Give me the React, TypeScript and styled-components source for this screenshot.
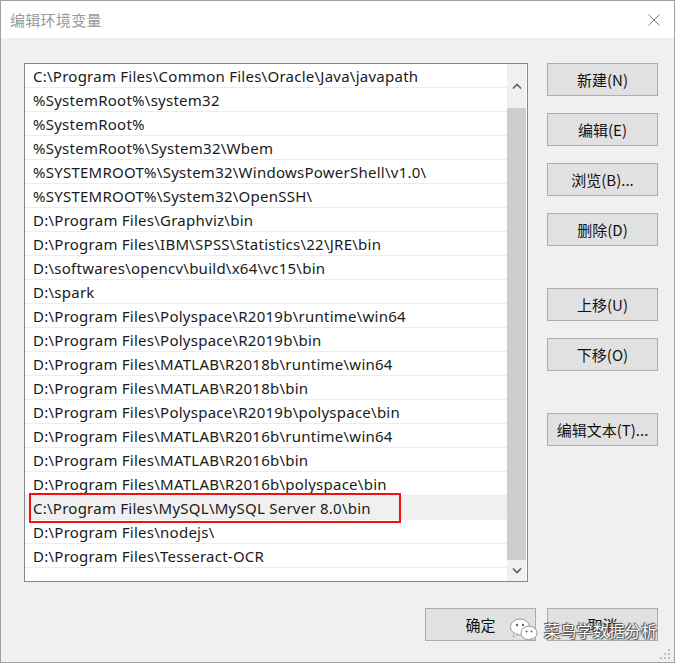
import React from "react";
import styled, { createGlobalStyle } from "styled-components";

const Global = createGlobalStyle`
  html, body { margin: 0; padding: 0; background: #ffffff; }
  body { font-family: "Noto Sans CJK SC", "Noto Sans", sans-serif; }
`;

const Dialog = styled.div`
  position: relative;
  width: 673px;
  height: 661px;
  border: 1px solid #a0a0a0;
  background: #f0f0f0;
  display: flex;
  flex-direction: column;
`;

const TitleBar = styled.div`
  height: 37px;
  background: #ffffff;
  display: flex;
  align-items: center;
  justify-content: space-between;
  padding: 0 14px 0 9px;
`;

const Title = styled.span`
  font-size: 15px;
  color: #999999;
  letter-spacing: 0.3px;
`;

const Body = styled.div`
  flex: 1;
  display: flex;
  flex-direction: column;
  padding: 25px 16px 0 23px;
`;

const Main = styled.div`
  display: flex;
  gap: 19px;
`;

const ListBox = styled.div`
  width: 502px;
  height: 517px;
  border: 1px solid #828790;
  background: #ffffff;
  display: flex;
`;

const Rows = styled.div`
  flex: 1;
  display: flex;
  flex-direction: column;
`;

const Row = styled.div<{ $selected?: boolean }>`
  position: relative;
  box-sizing: border-box;
  height: 24px;
  border-bottom: 1px solid #ececec;
  background: ${(p) => (p.$selected ? "#f0f0f0" : "#ffffff")};
  display: flex;
  align-items: center;
  padding: 1px 0 0 8px;
  font-family: "Noto Sans", "Noto Sans CJK SC", sans-serif;
  font-size: 15px;
  letter-spacing: 0.25px;
  color: #1a1a1a;
  white-space: nowrap;
`;

const Highlight = styled.div`
  position: absolute;
  z-index: 2;
  left: 4px;
  top: -3px;
  width: 368px;
  height: 26px;
  border: 2px solid #ee1111;
  pointer-events: none;
`;

const ScrollBar = styled.div`
  width: 19px;
  margin-right: 1px;
  background: #f0f0f0;
  display: flex;
  flex-direction: column;
`;

const ScrollArrow = styled.div<{ $h: number }>`
  height: ${(p) => p.$h}px;
  display: flex;
  justify-content: center;
  align-items: center;
`;

const Thumb = styled.div`
  flex: 1;
  background: #cdcdcd;
`;

const ButtonCol = styled.div`
  display: flex;
  flex-direction: column;
`;

const Btn = styled.button<{ $gapTop?: number }>`
  width: 111px;
  height: 33px;
  margin-top: ${(p) => p.$gapTop ?? 0}px;
  border: 1px solid #adadad;
  background: #e1e1e1;
  font-family: "Noto Sans CJK SC", "Noto Sans", sans-serif;
  font-size: 15px;
  color: #111111;
  padding: 0;
  display: flex;
  align-items: center;
  justify-content: center;
`;

const Footer = styled.div`
  display: flex;
  justify-content: flex-end;
  gap: 11px;
  padding-top: 26px;
`;

const Grip = styled.div`
  position: absolute;
  right: 4px;
  bottom: 3px;
  display: flex;
`;

const Watermark = styled.div`
  position: absolute;
  left: 509px;
  top: 617px;
  display: flex;
  align-items: center;
  gap: 6px;
`;

const WmText = styled.span`
  font-family: "Noto Sans CJK SC", sans-serif;
  font-size: 16px;
  color: #ffffff;
  letter-spacing: 0.2px;
  text-shadow: 0 0 1px #333, 0 0 1px #333, 1px 1px 1px #555, -1px -1px 1px #555;
`;

const paths = [
  "C:\\Program Files\\Common Files\\Oracle\\Java\\javapath",
  "%SystemRoot%\\system32",
  "%SystemRoot%",
  "%SystemRoot%\\System32\\Wbem",
  "%SYSTEMROOT%\\System32\\WindowsPowerShell\\v1.0\\",
  "%SYSTEMROOT%\\System32\\OpenSSH\\",
  "D:\\Program Files\\Graphviz\\bin",
  "D:\\Program Files\\IBM\\SPSS\\Statistics\\22\\JRE\\bin",
  "D:\\softwares\\opencv\\build\\x64\\vc15\\bin",
  "D:\\spark",
  "D:\\Program Files\\Polyspace\\R2019b\\runtime\\win64",
  "D:\\Program Files\\Polyspace\\R2019b\\bin",
  "D:\\Program Files\\MATLAB\\R2018b\\runtime\\win64",
  "D:\\Program Files\\MATLAB\\R2018b\\bin",
  "D:\\Program Files\\Polyspace\\R2019b\\polyspace\\bin",
  "D:\\Program Files\\MATLAB\\R2016b\\runtime\\win64",
  "D:\\Program Files\\MATLAB\\R2016b\\bin",
  "D:\\Program Files\\MATLAB\\R2016b\\polyspace\\bin",
  "C:\\Program Files\\MySQL\\MySQL Server 8.0\\bin",
  "D:\\Program Files\\nodejs\\",
  "D:\\Program Files\\Tesseract-OCR",
];

const sideButtons: { label: string; gap: number }[] = [
  { label: "新建(N)", gap: 0 },
  { label: "编辑(E)", gap: 17 },
  { label: "浏览(B)...", gap: 17 },
  { label: "删除(D)", gap: 17 },
  { label: "上移(U)", gap: 42 },
  { label: "下移(O)", gap: 17 },
  { label: "编辑文本(T)...", gap: 42 },
];

export default function App() {
  return (
    <>
      <Global />
      <Dialog>
        <TitleBar>
          <Title>编辑环境变量</Title>
          <svg width="12" height="12" viewBox="0 0 12 12">
            <path d="M0.5 0.5 L11.5 11.5 M11.5 0.5 L0.5 11.5" stroke="#777" strokeWidth="1" fill="none" />
          </svg>
        </TitleBar>
        <Body>
          <Main>
            <ListBox>
              <Rows>
                {paths.map((p, i) => (
                  <Row key={i} $selected={i === 18}>
                    {p}
                    {i === 18 && <Highlight />}
                  </Row>
                ))}
              </Rows>
              <ScrollBar>
                <ScrollArrow $h={44}>
                  <svg width="10" height="6" viewBox="0 0 10 6">
                    <path d="M1 5.5 L5 1.5 L9 5.5" stroke="#606060" strokeWidth="1.6" fill="none" />
                  </svg>
                </ScrollArrow>
                <Thumb />
                <ScrollArrow $h={21}>
                  <svg width="10" height="6" viewBox="0 0 10 6">
                    <path d="M1 0.5 L5 4.5 L9 0.5" stroke="#606060" strokeWidth="1.6" fill="none" />
                  </svg>
                </ScrollArrow>
              </ScrollBar>
            </ListBox>
            <ButtonCol>
              {sideButtons.map((b) => (
                <Btn key={b.label} $gapTop={b.gap}>
                  {b.label}
                </Btn>
              ))}
            </ButtonCol>
          </Main>
          <Footer>
            <Btn>确定</Btn>
            <Btn>取消</Btn>
          </Footer>
        </Body>
        <Grip>
          <svg width="10" height="10" viewBox="0 0 10 10">
            {[
              [8, 0], [8, 4], [4, 4], [8, 8], [4, 8], [0, 8],
            ].map(([x, y], i) => (
              <rect key={i} x={x} y={y} width="2" height="2" fill="#bdbdbd" />
            ))}
          </svg>
        </Grip>
        <Watermark>
          <svg width="28" height="24" viewBox="0 0 28 24">
            <ellipse cx="10" cy="9" rx="9.5" ry="8" fill="#ffffff" stroke="#888" strokeWidth="0.8" />
            <path d="M4 15 L3 19 L8 16 Z" fill="#ffffff" stroke="#888" strokeWidth="0.6" />
            <circle cx="7" cy="7" r="1.2" fill="#666" />
            <circle cx="13" cy="7" r="1.2" fill="#666" />
            <ellipse cx="19" cy="15" rx="8" ry="6.8" fill="#ffffff" stroke="#888" strokeWidth="0.8" />
            <path d="M23 20 L25 23 L20 21 Z" fill="#ffffff" stroke="#888" strokeWidth="0.6" />
            <circle cx="16.5" cy="13.5" r="1" fill="#666" />
            <circle cx="21.5" cy="13.5" r="1" fill="#666" />
          </svg>
          <WmText>菜鸟学数据分析</WmText>
        </Watermark>
      </Dialog>
    </>
  );
}
